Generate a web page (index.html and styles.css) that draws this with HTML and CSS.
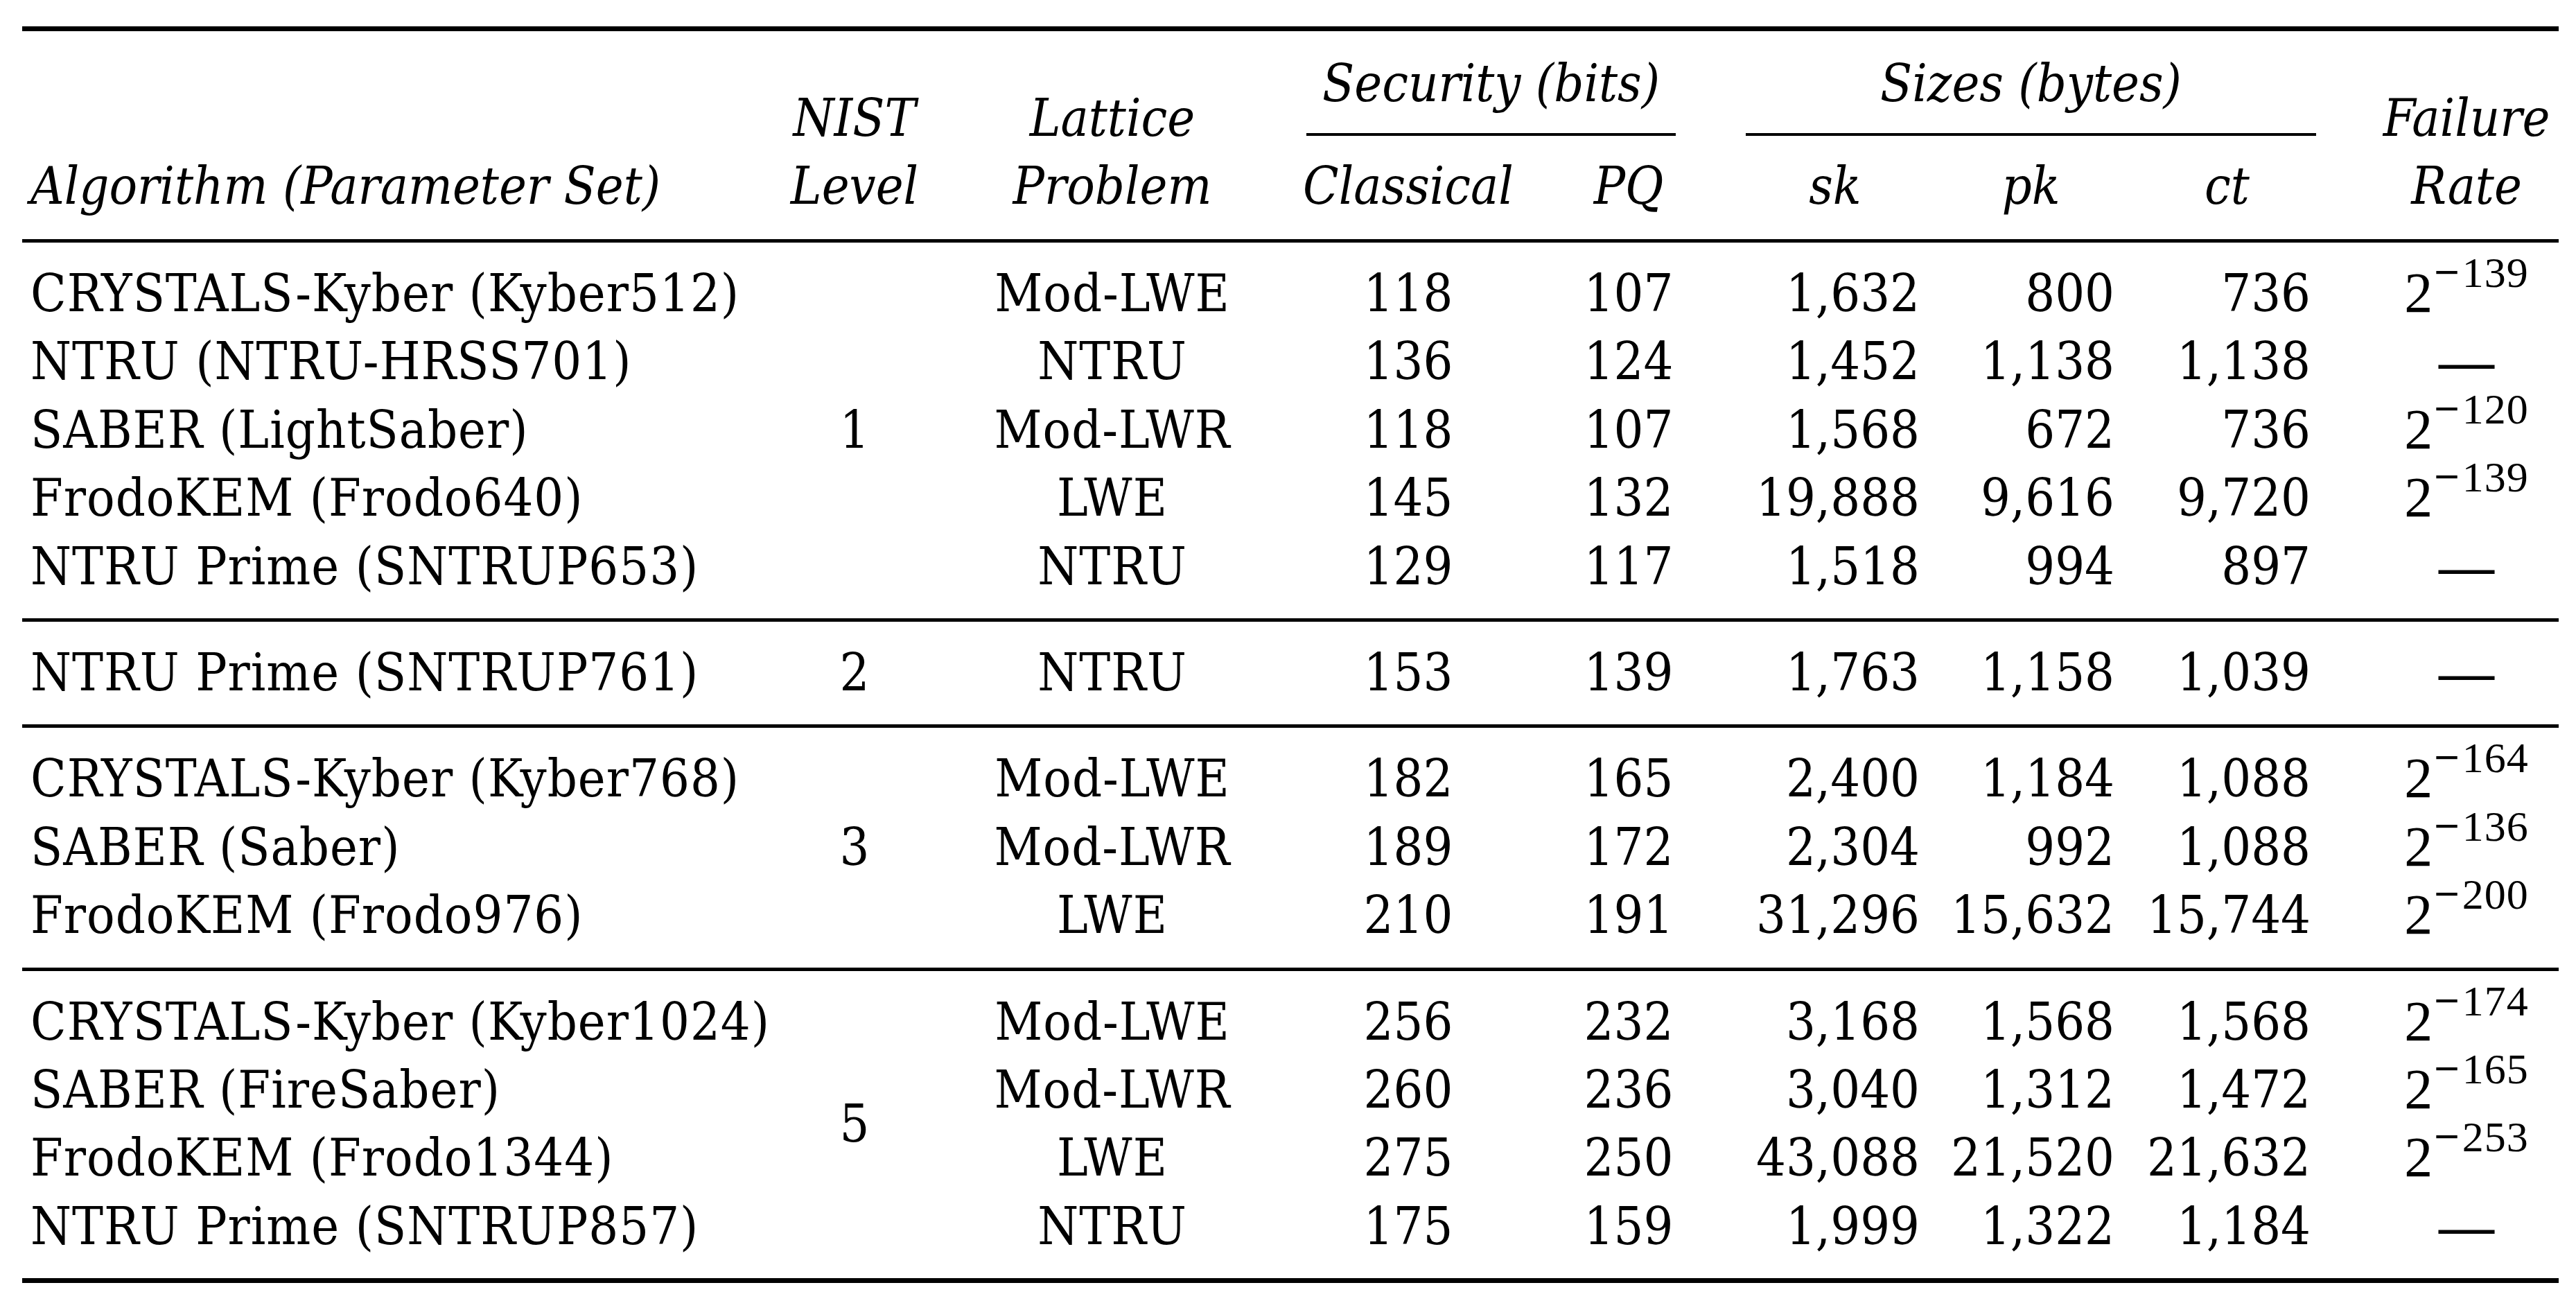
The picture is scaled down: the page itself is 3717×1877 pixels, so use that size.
FILE: index.html
```html
<!DOCTYPE html>
<html lang="en">
<head>
<meta charset="utf-8">
<title>Lattice KEM parameter sets</title>
<link rel="stylesheet" href="styles.css">
</head>
<body>
<div class="table">
  <div class="head">
    <div class="hc c1 rowB it">Algorithm (Parameter Set)</div>
    <div class="hc c2 tall it">NIST<br>Level</div>
    <div class="hc c3 tall it">Lattice<br>Problem</div>
    <div class="hc sec it">Security (bits)</div>
    <div class="hc siz it">Sizes (bytes)</div>
    <div class="cmid sec"></div>
    <div class="cmid siz"></div>
    <div class="hc c4 rowB it">Classical</div>
    <div class="hc c5 rowB it">PQ</div>
    <div class="hc c6 rowB it">sk</div>
    <div class="hc c7 rowB it">pk</div>
    <div class="hc c8 rowB it">ct</div>
    <div class="hc c9 tall it">Failure<br>Rate</div>
  </div>

  <div class="group g5">
    <div class="level">1</div>
    <div class="row"><div class="cell alg">CRYSTALS-Kyber (Kyber512)</div><div class="cell lat">Mod-LWE</div><div class="cell cls">118</div><div class="cell pq">107</div><div class="cell sk">1,632</div><div class="cell pk">800</div><div class="cell ct">736</div><div class="cell fr"><span class="pow">2<sup><span class="minus">−</span>139</sup></span></div></div>
    <div class="row"><div class="cell alg">NTRU (NTRU-HRSS701)</div><div class="cell lat">NTRU</div><div class="cell cls">136</div><div class="cell pq">124</div><div class="cell sk">1,452</div><div class="cell pk">1,138</div><div class="cell ct">1,138</div><div class="cell fr"><span class="dash">—</span></div></div>
    <div class="row"><div class="cell alg">SABER (LightSaber)</div><div class="cell lat">Mod-LWR</div><div class="cell cls">118</div><div class="cell pq">107</div><div class="cell sk">1,568</div><div class="cell pk">672</div><div class="cell ct">736</div><div class="cell fr"><span class="pow">2<sup><span class="minus">−</span>120</sup></span></div></div>
    <div class="row"><div class="cell alg">FrodoKEM (Frodo640)</div><div class="cell lat">LWE</div><div class="cell cls">145</div><div class="cell pq">132</div><div class="cell sk">19,888</div><div class="cell pk">9,616</div><div class="cell ct">9,720</div><div class="cell fr"><span class="pow">2<sup><span class="minus">−</span>139</sup></span></div></div>
    <div class="row"><div class="cell alg">NTRU Prime (SNTRUP653)</div><div class="cell lat">NTRU</div><div class="cell cls">129</div><div class="cell pq">117</div><div class="cell sk">1,518</div><div class="cell pk">994</div><div class="cell ct">897</div><div class="cell fr"><span class="dash">—</span></div></div>
  </div>

  <div class="group g1">
    <div class="level">2</div>
    <div class="row"><div class="cell alg">NTRU Prime (SNTRUP761)</div><div class="cell lat">NTRU</div><div class="cell cls">153</div><div class="cell pq">139</div><div class="cell sk">1,763</div><div class="cell pk">1,158</div><div class="cell ct">1,039</div><div class="cell fr"><span class="dash">—</span></div></div>
  </div>

  <div class="group g3">
    <div class="level">3</div>
    <div class="row"><div class="cell alg">CRYSTALS-Kyber (Kyber768)</div><div class="cell lat">Mod-LWE</div><div class="cell cls">182</div><div class="cell pq">165</div><div class="cell sk">2,400</div><div class="cell pk">1,184</div><div class="cell ct">1,088</div><div class="cell fr"><span class="pow">2<sup><span class="minus">−</span>164</sup></span></div></div>
    <div class="row"><div class="cell alg">SABER (Saber)</div><div class="cell lat">Mod-LWR</div><div class="cell cls">189</div><div class="cell pq">172</div><div class="cell sk">2,304</div><div class="cell pk">992</div><div class="cell ct">1,088</div><div class="cell fr"><span class="pow">2<sup><span class="minus">−</span>136</sup></span></div></div>
    <div class="row"><div class="cell alg">FrodoKEM (Frodo976)</div><div class="cell lat">LWE</div><div class="cell cls">210</div><div class="cell pq">191</div><div class="cell sk">31,296</div><div class="cell pk">15,632</div><div class="cell ct">15,744</div><div class="cell fr"><span class="pow">2<sup><span class="minus">−</span>200</sup></span></div></div>
  </div>

  <div class="group g4 last">
    <div class="level">5</div>
    <div class="row"><div class="cell alg">CRYSTALS-Kyber (Kyber1024)</div><div class="cell lat">Mod-LWE</div><div class="cell cls">256</div><div class="cell pq">232</div><div class="cell sk">3,168</div><div class="cell pk">1,568</div><div class="cell ct">1,568</div><div class="cell fr"><span class="pow">2<sup><span class="minus">−</span>174</sup></span></div></div>
    <div class="row"><div class="cell alg">SABER (FireSaber)</div><div class="cell lat">Mod-LWR</div><div class="cell cls">260</div><div class="cell pq">236</div><div class="cell sk">3,040</div><div class="cell pk">1,312</div><div class="cell ct">1,472</div><div class="cell fr"><span class="pow">2<sup><span class="minus">−</span>165</sup></span></div></div>
    <div class="row"><div class="cell alg">FrodoKEM (Frodo1344)</div><div class="cell lat">LWE</div><div class="cell cls">275</div><div class="cell pq">250</div><div class="cell sk">43,088</div><div class="cell pk">21,520</div><div class="cell ct">21,632</div><div class="cell fr"><span class="pow">2<sup><span class="minus">−</span>253</sup></span></div></div>
    <div class="row"><div class="cell alg">NTRU Prime (SNTRUP857)</div><div class="cell lat">NTRU</div><div class="cell cls">175</div><div class="cell pq">159</div><div class="cell sk">1,999</div><div class="cell pk">1,322</div><div class="cell ct">1,184</div><div class="cell fr"><span class="dash">—</span></div></div>
  </div>
</div>
</body>
</html>
```

FILE: styles.css
```css
html, body {
  margin: 0;
  padding: 0;
  background: #ffffff;
}

body {
  color: #000000;
  font-family: "DejaVu Serif Condensed", "DejaVu Serif", serif;
  font-stretch: semi-condensed;
  font-size: 75px;
  line-height: 98.4px;
}

.table {
  width: 3660px;
  margin: 38px 0 0 32px;
  border-top: 7px solid #000;
}

.head,
.group {
  display: grid;
  grid-template-columns: 1093px 216px 528px 326px 310px 285px 282px 283px 337px;
}

.head {
  grid-template-rows: 98px 50px 98px;
  padding: 26px 0 28px 0;
}

.it {
  font-style: italic;
}

.hc {
  white-space: nowrap;
  text-align: center;
}

.rowB {
  grid-row: 3;
}

.tall {
  grid-row: 1 / 4;
  align-self: end;
  line-height: 98px;
}

.hc.c1 { grid-column: 1; text-align: left; padding-left: 12px; }
.hc.c2 { grid-column: 2; }
.hc.c3 { grid-column: 3; }
.hc.c4 { grid-column: 4; }
.hc.c5 { grid-column: 5; }
.hc.c6 { grid-column: 6; padding: 0 20px 0 21px; }
.hc.c7 { grid-column: 7; padding: 0 21px 0 20px; }
.hc.c8 { grid-column: 8; padding: 0 21px 0 21px; }
.hc.c9 { grid-column: 9; padding-left: 71px; }

.sec {
  grid-column: 4 / 6;
  margin: 0 87px 0 16px;
}

.siz {
  grid-column: 6 / 9;
  margin: 0 13px 0 14px;
}

.hc.sec,
.hc.siz {
  grid-row: 1;
}

.cmid {
  grid-row: 2;
  align-self: start;
  margin-top: 23px;
  height: 4px;
  background: #000;
}

.group {
  border-top: 5px solid #000;
  padding: 24px 0 26px 0;
}

.group.last {
  border-bottom: 7px solid #000;
}

.g5 { grid-template-rows: repeat(5, 98.4px); }
.g1 { grid-template-rows: repeat(1, 98.4px); }
.g3 { grid-template-rows: repeat(3, 98.4px); }
.g4 { grid-template-rows: repeat(4, 98.4px); }

.level {
  grid-column: 2;
  grid-row: 1 / -1;
  align-self: center;
  text-align: center;
}

.row {
  display: contents;
}

.cell {
  white-space: nowrap;
}

.alg { grid-column: 1; padding-left: 12px; letter-spacing: 1px; }
.lat { grid-column: 3; text-align: center; letter-spacing: 1px; }
.cls { grid-column: 4; text-align: center; }
.pq  { grid-column: 5; text-align: center; }
.sk  { grid-column: 6; text-align: right; padding: 0 20px 0 21px; }
.pk  { grid-column: 7; text-align: right; padding: 0 21px 0 20px; }
.ct  { grid-column: 8; text-align: right; padding: 0 21px 0 21px; }
.fr  { grid-column: 9; text-align: center; padding-left: 71px; }

.pow {
  font-family: "Liberation Serif", serif;
  font-size: 82px;
}

.pow sup {
  font-family: "Liberation Serif", serif;
  font-size: 62px;
  line-height: 0;
  vertical-align: 36px;
  letter-spacing: 1px;
}

.pow .minus {
  font-family: "DejaVu Serif", serif;
  font-size: 54px;
  vertical-align: 4px;
  letter-spacing: 2px;
}

.dash {
  font-family: "Liberation Serif", serif;
  font-size: 80px;
  font-weight: bold;
}
```
